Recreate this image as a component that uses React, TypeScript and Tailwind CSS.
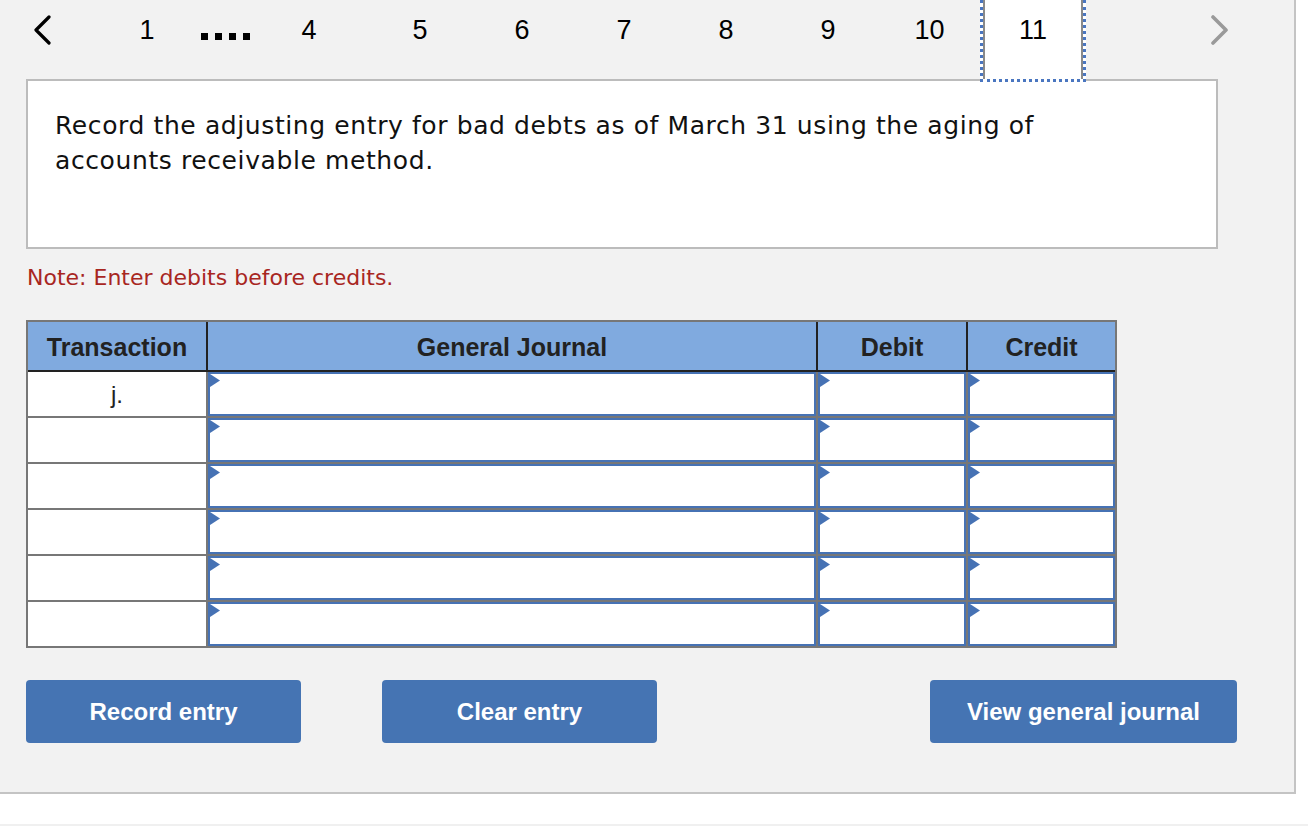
import React from "react";

const arial = { fontFamily: '"Liberation Sans", Arial, sans-serif' };
const verdana = { fontFamily: '"DejaVu Sans", Verdana, sans-serif' };

const pages = ["5", "6", "7", "8", "9"];

function InputCell({ width, last }: { width: string; last?: boolean }) {
  return (
    <div className={`${width} h-full ${last ? "" : "border-r-2 border-[#777]"}`}>
      <div className="relative w-full h-full bg-white border-2 border-[#4672b4]">
        {/* little marker arrow in the top-left corner */}
        <svg
          viewBox="0 0 10 13"
          className="absolute left-0 top-0 w-[10px] h-[13px]"
        >
          <path d="M0 0 L10 6.5 L0 13 Z" fill="#4672b4" />
        </svg>
      </div>
    </div>
  );
}

function Row({ label, last }: { label?: string; last?: boolean }) {
  return (
    <div
      className={`flex ${last ? "h-[44px]" : "h-[46px] border-b-2 border-[#777]"}`}
    >
      <div
        className="w-[180px] h-full bg-white border-r-2 border-[#777] flex justify-center pt-[9px] text-[24px] leading-[28px] text-[#222]"
        style={arial}
      >
        {label}
      </div>
      <InputCell width="w-[610px]" />
      <InputCell width="w-[150px]" />
      <InputCell width="w-[147px]" last />
    </div>
  );
}

export default function App() {
  return (
    <div className="w-[1308px] h-[834px] bg-white overflow-hidden">
      <div className="w-[1296px] h-[794px] bg-[#f2f2f2] border-r-2 border-b-2 border-[#c4c4c4]">
        {/* Question navigation */}
        <div className="flex h-[79px] items-start text-[27px] text-black" style={arial}>
          <div className="w-[84px] h-[60px] flex items-center justify-center">
            <svg viewBox="0 0 20 30" className="w-[20px] h-[30px]">
              <path
                d="M17 2 L4 15 L17 28"
                fill="none"
                stroke="#000"
                strokeWidth={3.2}
                strokeLinecap="round"
                strokeLinejoin="round"
              />
            </svg>
          </div>
          <div className="w-[126px] h-[60px] flex items-center justify-center">1</div>
          <div className="w-[30px] h-[60px] flex items-center justify-center">
            <div className="flex gap-[7px] mt-[12px]">
              <div className="w-[7px] h-[7px] bg-black" />
              <div className="w-[7px] h-[7px] bg-black" />
              <div className="w-[7px] h-[7px] bg-black" />
              <div className="w-[7px] h-[7px] bg-black" />
            </div>
          </div>
          <div className="w-[120px] ml-[9px] h-[60px] flex items-center justify-center">4</div>
          {pages.map((p) => (
            <div key={p} className="w-[102px] h-[60px] flex items-center justify-center">
              {p}
            </div>
          ))}
          <div className="w-[101px] h-[60px] flex items-center justify-center">10</div>
          <div className="relative z-10 w-[106px] h-[82px] bg-white border-x-[3px] border-b-[3px] border-dotted border-[#4a76c0]">
            <div className="h-[79px] border-x-2 border-[#8a8a8a] flex justify-center pt-[13px] leading-[34px]">
              11
            </div>
          </div>
          <div className="w-[84px] ml-auto mr-[32px] h-[60px] flex items-center justify-center">
            <svg viewBox="0 0 20 30" className="w-[20px] h-[30px]">
              <path
                d="M3 2 L16 15 L3 28"
                fill="none"
                stroke="#9a9a9a"
                strokeWidth={3.6}
                strokeLinecap="round"
                strokeLinejoin="round"
              />
            </svg>
          </div>
        </div>

        {/* Question text */}
        <div
          className="ml-[26px] w-[1192px] h-[170px] bg-white border-2 border-[#bcbcbc] pl-[27px] pt-[27px] text-[25px] leading-[35px] tracking-[0.6px] text-[#111]"
          style={verdana}
        >
          Record the adjusting entry for bad debts as of March 31 using the aging of
          <br />
          accounts receivable method.
        </div>

        <div
          className="ml-[27px] mt-[11px] text-[22px] leading-[35px] text-[#a8261f]"
          style={verdana}
        >
          Note: Enter debits before credits.
        </div>

        {/* Journal table */}
        <div className="ml-[26px] mt-[25px] w-[1091px] border-2 border-[#777]">
          <div
            className="flex h-[50px] bg-[#80aadf] border-b-2 border-[#222] text-[25px] font-bold text-[#222]"
            style={arial}
          >
            <div className="w-[180px] pt-[3px] border-r-2 border-[#222] flex items-center justify-center">
              Transaction
            </div>
            <div className="w-[610px] pt-[3px] border-r-2 border-[#222] flex items-center justify-center">
              General Journal
            </div>
            <div className="w-[150px] pt-[3px] border-r-2 border-[#222] flex items-center justify-center">
              Debit
            </div>
            <div className="w-[147px] pt-[3px] flex items-center justify-center">Credit</div>
          </div>
          <Row label="j." />
          <Row />
          <Row />
          <Row />
          <Row />
          <Row last />
        </div>

        {/* Actions */}
        <div className="flex ml-[26px] mt-[32px] text-[24px] font-bold text-white" style={arial}>
          <button className="w-[275px] h-[63px] rounded-[4px] bg-[#4574b3]">Record entry</button>
          <button className="w-[275px] h-[63px] ml-[81px] rounded-[4px] bg-[#4574b3]">
            Clear entry
          </button>
          <button className="w-[307px] h-[63px] ml-[273px] rounded-[4px] bg-[#4574b3]">
            View general journal
          </button>
        </div>
      </div>
      <div className="mt-[30px] h-[2px] bg-[#f0f0f0]" />
    </div>
  );
}
